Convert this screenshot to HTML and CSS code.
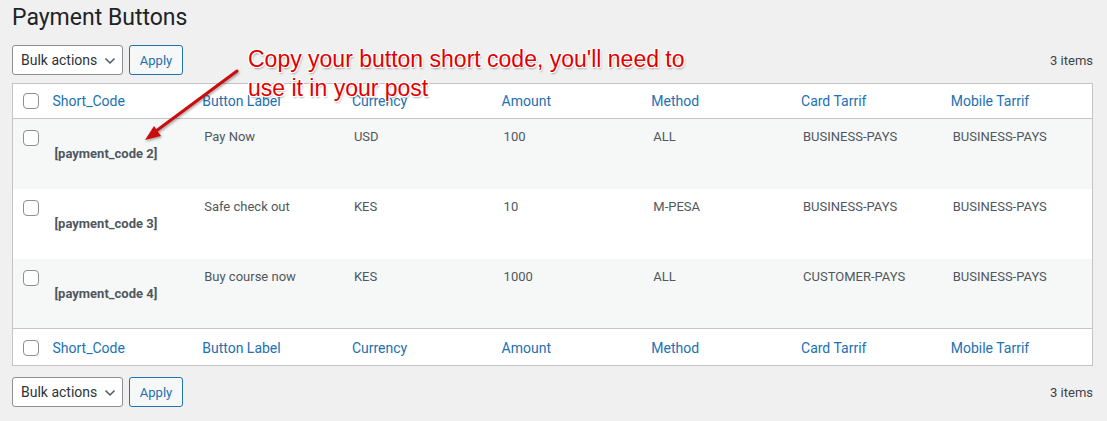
FILE: index.html
```html
<!DOCTYPE html>
<html>
<head>
<meta charset="utf-8">
<link rel="stylesheet" href="styles.css">
</head>
<body>
<div class="wrap">
  <h1 class="title">Payment Buttons</h1>
  <div class="tablenav top">
    <div class="actions">
      <div class="select">Bulk actions <svg class="chev" width="12" height="8" viewBox="0 0 12 8"><path d="M1.5 1.5 L6 6 L10.5 1.5" fill="none" stroke="#50575e" stroke-width="1.5"/></svg></div>
      <button class="apply">Apply</button>
    </div>
    <div class="count">3 items</div>
  </div>
  <table class="list">
    <thead>
      <tr>
        <th class="cb"><span class="box"></span></th>
        <th>Short_Code</th><th>Button Label</th><th>Currency</th><th>Amount</th><th>Method</th><th>Card Tarrif</th><th>Mobile Tarrif</th>
      </tr>
    </thead>
    <tbody>
      <tr class="alt">
        <td class="cb"><span class="box"></span></td>
        <td class="code"><br><strong>[payment_code 2]</strong></td>
        <td>Pay Now</td><td>USD</td><td>100</td><td>ALL</td><td>BUSINESS-PAYS</td><td>BUSINESS-PAYS</td>
      </tr>
      <tr>
        <td class="cb"><span class="box"></span></td>
        <td class="code"><br><strong>[payment_code 3]</strong></td>
        <td>Safe check out</td><td>KES</td><td>10</td><td>M-PESA</td><td>BUSINESS-PAYS</td><td>BUSINESS-PAYS</td>
      </tr>
      <tr class="alt">
        <td class="cb"><span class="box"></span></td>
        <td class="code"><br><strong>[payment_code 4]</strong></td>
        <td>Buy course now</td><td>KES</td><td>1000</td><td>ALL</td><td>CUSTOMER-PAYS</td><td>BUSINESS-PAYS</td>
      </tr>
    </tbody>
    <tfoot>
      <tr>
        <th class="cb"><span class="box"></span></th>
        <th>Short_Code</th><th>Button Label</th><th>Currency</th><th>Amount</th><th>Method</th><th>Card Tarrif</th><th>Mobile Tarrif</th>
      </tr>
    </tfoot>
  </table>
  <div class="tablenav bottom">
    <div class="actions">
      <div class="select">Bulk actions <svg class="chev" width="12" height="8" viewBox="0 0 12 8"><path d="M1.5 1.5 L6 6 L10.5 1.5" fill="none" stroke="#50575e" stroke-width="1.5"/></svg></div>
      <button class="apply">Apply</button>
    </div>
    <div class="count">3 items</div>
  </div>

  <svg class="arrow" width="120" height="90" viewBox="0 0 120 90">
    <defs>
      <filter id="sh" x="-20%" y="-20%" width="140%" height="140%">
        <feDropShadow dx="1" dy="1.5" stdDeviation="1" flood-color="#000" flood-opacity="0.35"/>
      </filter>
    </defs>
    <g filter="url(#sh)">
      <line x1="107" y1="11" x2="22" y2="74" stroke="#c8100f" stroke-width="3" stroke-linecap="round"/>
      <polygon points="15,80 24,66 31,76" fill="#c8100f"/>
    </g>
  </svg>
  <div class="note">Copy your button short code, you'll need to<br>use it in your post</div>
</div>
</body>
</html>
```

FILE: styles.css
```css
html, body {
  margin: 0;
  padding: 0;
  background: #f0f0f1;
}
body {
  font-family: Roboto, "Liberation Sans", sans-serif;
  color: #3c434a;
  font-size: 13px;
}
.wrap {
  position: relative;
  padding: 3px 14px 0 12px;
  height: 418px;
}
.title {
  margin: 0;
  font-size: 23px;
  font-weight: 400;
  line-height: 30px;
  color: #1d2327;
}
.tablenav {
  display: flex;
  justify-content: space-between;
  align-items: center;
  height: 30px;
}
.tablenav.top {
  margin-top: 12px;
  margin-bottom: 8px;
}
.tablenav.bottom {
  margin-top: 11px;
}
.actions {
  display: flex;
  gap: 6px;
}
.select {
  box-sizing: border-box;
  width: 111px;
  height: 30px;
  border: 1px solid #8c8f94;
  border-radius: 3px;
  background: #fff;
  color: #2c3338;
  font-size: 14px;
  line-height: 28px;
  padding-left: 8px;
  display: flex;
  align-items: center;
  gap: 7px;
}
.chev {
  margin-top: 1px;
}
.apply {
  box-sizing: border-box;
  width: 54px;
  height: 30px;
  border: 1px solid #2271b1;
  border-radius: 3px;
  background: #f6f7f7;
  color: #2271b1;
  font-family: Roboto, "Liberation Sans", sans-serif;
  font-size: 13px;
  padding: 0;
}
.count {
  font-size: 13px;
  color: #3c434a;
}
.list {
  width: 100%;
  border: 1px solid #c3c4c7;
  border-collapse: collapse;
  border-spacing: 0;
  table-layout: fixed;
  background: #fff;
}
.list th {
  text-align: left;
  font-weight: 400;
  font-size: 14px;
  color: #2271b1;
  line-height: 18px;
  padding: 8px 8px;
  height: 34px;
  box-sizing: border-box;
}
.list tfoot th {
  height: 37px;
  padding-top: 10px;
}
.list th.cb, .list td.cb {
  width: 32px;
  padding: 0 0 0 10px;
  box-sizing: border-box;
}
.list th.cb {
  vertical-align: middle;
}
.list tfoot th.cb {
  padding-top: 1px;
}
.list thead tr {
  border-bottom: 1px solid #c3c4c7;
}
.list tfoot tr {
  border-top: 1px solid #c3c4c7;
}
.list tbody tr {
  height: 70px;
}
.list tbody tr.alt {
  background: #f6f7f7;
}
.list td {
  vertical-align: top;
  padding: 9px 8px 8px 10px;
  font-size: 13px;
  line-height: 17px;
  color: #50575e;
}
.list td.cb {
  padding-top: 11px;
}
.list td.code strong {
  color: #50575e;
  font-weight: 700;
}
.box {
  display: block;
  width: 16px;
  height: 16px;
  box-sizing: border-box;
  border: 1px solid #8c8f94;
  border-radius: 4px;
  background: #fff;
}
.note {
  position: absolute;
  left: 248px;
  top: 45px;
  font-family: "Liberation Sans", Arial, sans-serif;
  font-size: 23px;
  line-height: 29px;
  color: #e10000;
  text-shadow: -1px -1px 0 #fff, 1px -1px 0 #fff, -1px 1px 0 #fff, 1px 1px 0 #fff, 0 -1px 0 #fff, 0 1px 0 #fff, -1px 0 0 #fff, 1px 0 0 #fff, 1px 2px 2px rgba(0,0,0,0.35);
}
.arrow {
  position: absolute;
  left: 130px;
  top: 60px;
}
```
